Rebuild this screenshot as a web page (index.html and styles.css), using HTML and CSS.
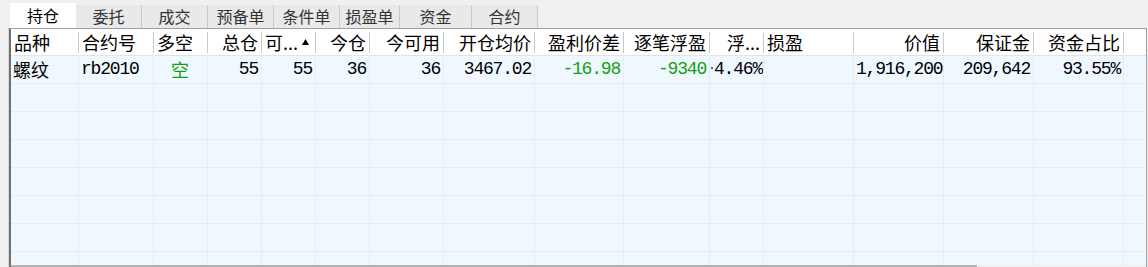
FILE: index.html
```html
<!DOCTYPE html>
<html lang="zh-CN">
<head>
  <meta charset="UTF-8" />
  <title>持仓</title>
  <link rel="stylesheet" href="styles.css">
</head>
<body>
  <!-- 标签页 -->
  <div class="tabs">
    <div class="tab active">持仓</div>
    <div class="tab">委托</div>
    <div class="tab">成交</div>
    <div class="tab">预备单</div>
    <div class="tab">条件单</div>
    <div class="tab narrow">损盈单</div>
    <div class="tab wide">资金</div>
    <div class="tab">合约</div>
  </div>

  <div class="panel">
    <div class="grid head">
      <div class="th">品种</div>
      <div class="th">合约号</div>
      <div class="th">多空</div>
      <div class="th r">总仓</div>
      <div class="th sort"><span>可...</span>
        <svg class="arrow" width="7" height="6" viewBox="0 0 7 6"><path d="M3.5 0L7 6H0z" fill="#000"/></svg>
      </div>
      <div class="th r">今仓</div>
      <div class="th r">今可用</div>
      <div class="th r">开仓均价</div>
      <div class="th r">盈利价差</div>
      <div class="th r">逐笔浮盈</div>
      <div class="th r">浮...</div>
      <div class="th">损盈</div>
      <div class="th r">价值</div>
      <div class="th r">保证金</div>
      <div class="th r">资金占比</div>
      <div class="th last"></div>
    </div>

    <div class="body">
      <div class="grid row">
        <div class="td cn">螺纹</div>
        <div class="td num">rb2010</div>
        <div class="td cn c green">空</div>
        <div class="td num r">55</div>
        <div class="td num r">55</div>
        <div class="td num r">36</div>
        <div class="td num r">36</div>
        <div class="td num r">3467.02</div>
        <div class="td num r green">-16.98</div>
        <div class="td num r green">-9340</div>
        <div class="td num r tight"><span class="dot"></span>4.46%</div>
        <div class="td"></div>
        <div class="td num r">1,916,200</div>
        <div class="td num r">209,642</div>
        <div class="td num r">93.55%</div>
        <div class="td last"></div>
      </div>
      <div class="grid row empty"><div class="td"></div><div class="td"></div><div class="td"></div><div class="td"></div><div class="td"></div><div class="td"></div><div class="td"></div><div class="td"></div><div class="td"></div><div class="td"></div><div class="td"></div><div class="td"></div><div class="td"></div><div class="td"></div><div class="td"></div><div class="td last"></div></div>
      <div class="grid row empty"><div class="td"></div><div class="td"></div><div class="td"></div><div class="td"></div><div class="td"></div><div class="td"></div><div class="td"></div><div class="td"></div><div class="td"></div><div class="td"></div><div class="td"></div><div class="td"></div><div class="td"></div><div class="td"></div><div class="td"></div><div class="td last"></div></div>
      <div class="grid row empty"><div class="td"></div><div class="td"></div><div class="td"></div><div class="td"></div><div class="td"></div><div class="td"></div><div class="td"></div><div class="td"></div><div class="td"></div><div class="td"></div><div class="td"></div><div class="td"></div><div class="td"></div><div class="td"></div><div class="td"></div><div class="td last"></div></div>
      <div class="grid row empty"><div class="td"></div><div class="td"></div><div class="td"></div><div class="td"></div><div class="td"></div><div class="td"></div><div class="td"></div><div class="td"></div><div class="td"></div><div class="td"></div><div class="td"></div><div class="td"></div><div class="td"></div><div class="td"></div><div class="td"></div><div class="td last"></div></div>
      <div class="grid row empty"><div class="td"></div><div class="td"></div><div class="td"></div><div class="td"></div><div class="td"></div><div class="td"></div><div class="td"></div><div class="td"></div><div class="td"></div><div class="td"></div><div class="td"></div><div class="td"></div><div class="td"></div><div class="td"></div><div class="td"></div><div class="td last"></div></div>
      <div class="grid row empty"><div class="td"></div><div class="td"></div><div class="td"></div><div class="td"></div><div class="td"></div><div class="td"></div><div class="td"></div><div class="td"></div><div class="td"></div><div class="td"></div><div class="td"></div><div class="td"></div><div class="td"></div><div class="td"></div><div class="td"></div><div class="td last"></div></div>
      <div class="grid row empty"><div class="td"></div><div class="td"></div><div class="td"></div><div class="td"></div><div class="td"></div><div class="td"></div><div class="td"></div><div class="td"></div><div class="td"></div><div class="td"></div><div class="td"></div><div class="td"></div><div class="td"></div><div class="td"></div><div class="td"></div><div class="td last"></div></div>
    </div>

    <div class="hscroll"></div>
  </div>
</body>
</html>
```

FILE: styles.css
```css
body {
  margin: 0;
  width: 1148px;
  height: 267px;
  overflow: hidden;
  background: #f0f0f0;
  font-family: "Noto Sans CJK SC", sans-serif;
  color: #000;
}
.tabs {
  display: flex;
  align-items: flex-end;
  height: 28px;
  padding-left: 10px;
}
.tab {
  width: 66px;
  height: 23px;
  line-height: 23px;
  text-align: center;
  font-size: 16px;
  color: #333;
  background: #e9e9e9;
  border-right: 1px solid #c9c9c9;
  box-sizing: border-box;
}
.tab.narrow {
  width: 60px;
}
.tab.wide {
  width: 72px;
}
.tab.active {
  height: 25px;
  line-height: 25px;
  background: #fff;
  color: #000;
  border-right: none;
}
.panel {
  margin-left: 8px;
  width: 1139px;
  height: 239px;
  box-sizing: border-box;
  border-top: 1px solid #a0a0a0;
  border-right: 1px solid #a0a0a0;
  border-left: 1px solid #d8d8d8;
  padding-left: 2px;
  box-shadow: inset 2px 0 0 #707070;
  display: flex;
  flex-direction: column;
}
.grid {
  display: grid;
  grid-template-columns: 68px 75px 54px 54px 54px 54px 74px 91px 89px 86px 54px 90px 90px 90px 90px 1fr;
}
.head {
  height: 27px;
  background: #fff;
  border-bottom: 1px solid #e3e3e3;
  box-sizing: border-box;
}
.th {
  font-size: 18px;
  line-height: 26px;
  padding: 0 4px 0 3px;
  white-space: nowrap;
  overflow: hidden;
  background: linear-gradient(#c8c8c8, #c8c8c8) no-repeat right 0 top 3px / 1px 21px;
}
.th.r {
  text-align: right;
}
.th.last {
  background: none;
}
.th.sort {
  display: flex;
  align-items: center;
  justify-content: space-between;
  padding-right: 7px;
}
.arrow {
  display: block;
}
.body {
  flex: 1;
  overflow: hidden;
  background: #f0f8ff;
}
.row {
  height: 28px;
  box-sizing: border-box;
  border-bottom: 1px solid #e9ebec;
}
.td {
  border-right: 1px solid #e9ebec;
  line-height: 27px;
  padding: 0 3px 0 2px;
  white-space: nowrap;
  overflow: hidden;
}
.td.last {
  border-right: none;
}
.cn {
  font-size: 18px;
}
.num {
  font-family: "Liberation Mono", monospace;
  font-size: 18px;
  letter-spacing: -1.2px;
}
.r {
  text-align: right;
}
.c {
  text-align: center;
}
.tight {
  padding: 0 1px 0 0;
}
.dot {
  display: inline-block;
  width: 2px;
  height: 2px;
  background: #666;
  margin-right: 1px;
  vertical-align: 5px;
}
.green {
  color: #12a012;
}
.hscroll {
  width: 966px;
  height: 2px;
  background: #b2b2b2;
}
```
